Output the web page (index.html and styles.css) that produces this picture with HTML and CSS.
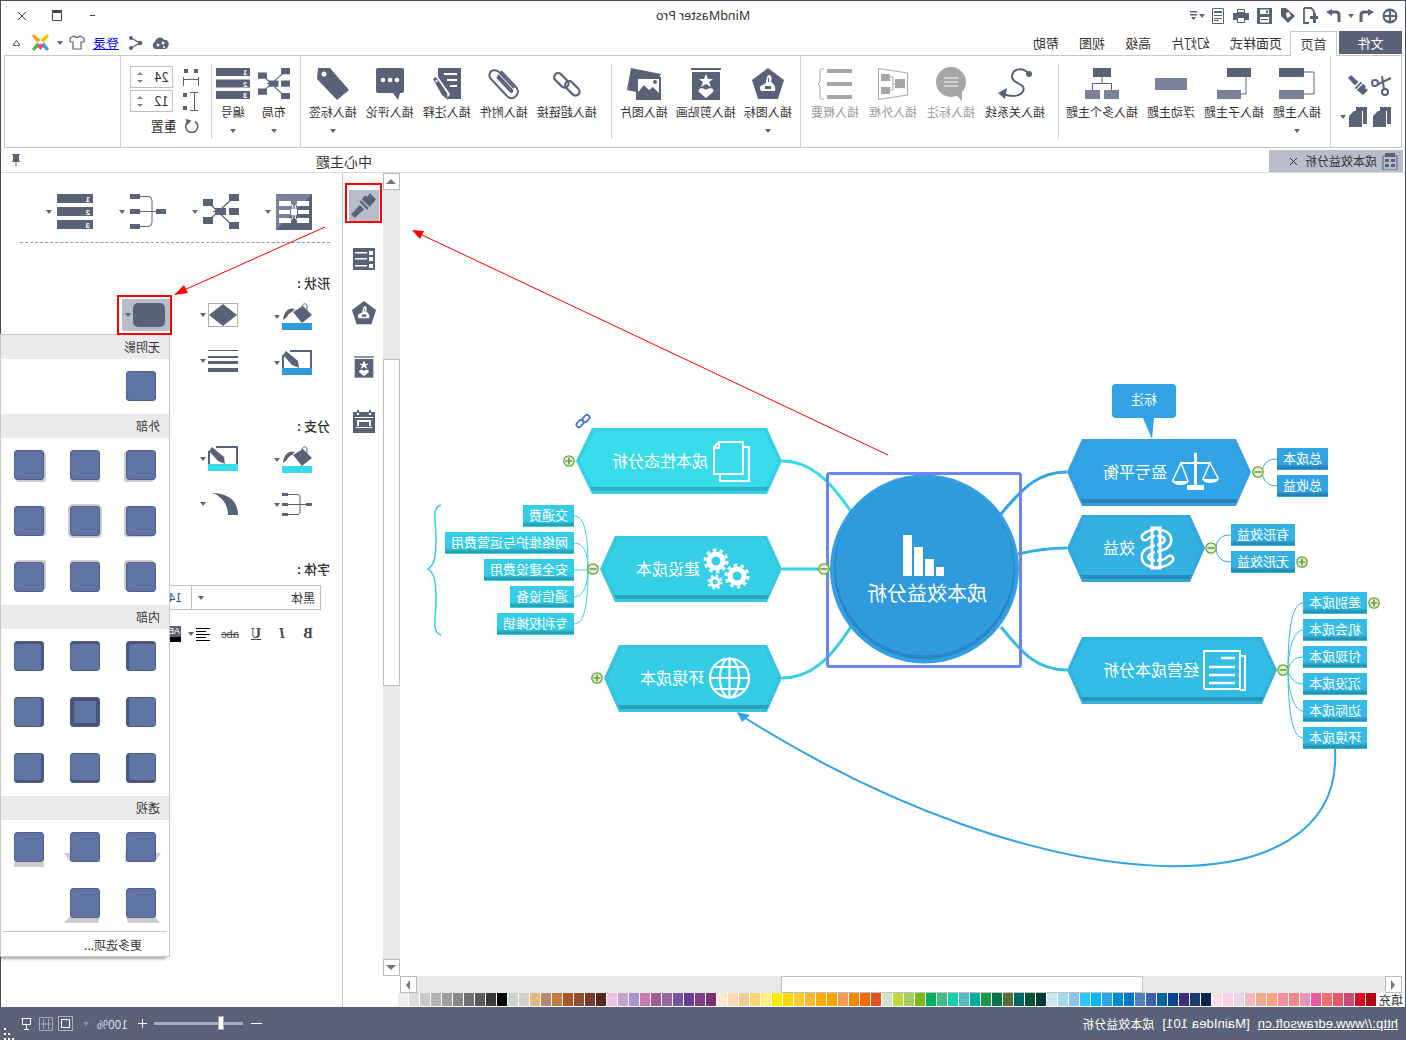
FILE: index.html
```html
<!DOCTYPE html>
<html lang="zh-CN">
<head>
<meta charset="utf-8">
<title>MindMaster Pro</title>
<link rel="stylesheet" href="styles.css">
</head>
<body>
<svg class="defs" width="0" height="0">
  <symbol id="i-brush" viewBox="0 0 24 24"><path d="M0 20.500 8.500 11.500 12.500 15.500 3.500 24Z"/><path d="M8 8.500 15.500 16 17 14.500 9.500 7Z"/><path d="M10.500 6 18 13.500 24 6 18 0 16 3.500 13.500 2.500Z"/></symbol>
  <symbol id="i-pent" viewBox="0 0 32 32"><path d="M16 0 32 12 26 31H6L0 12Z"/><path fill="#fff" d="M17 7c3 0 3 4 2 7 3 2 5 5 4 9H9c-2-3-1-6 2-6 1-1 2-2 3-2 0-3 1-8 3-8Z"/><path d="M13 18h6v3h-6zM16 10h1v4h-1z"/></symbol>
  <symbol id="i-clip" viewBox="0 0 30 32"><path d="M0 0H30V2H0Z"/><path d="M1 4H29V32H1Z"/><path fill="#fff" d="M15 6 17 11 22 11 18 14 20 19 15 16 10 19 12 14 8 11 13 11Z"/><path fill="#fff" d="M15 30 8 24C6 20 12 19 15 22 18 19 24 20 22 24Z"/></symbol>
  <symbol id="i-map" viewBox="0 0 36 36"><path fill="none" stroke="currentColor" stroke-width="1.200" d="M6 9 30 32M6 26 30 4"/><path d="M12 14H23V21H12ZM0 5H10V12H0ZM0 23H10V30H0ZM26 0H36V7H26ZM26 14H36V21H26ZM26 28H36V35H26ZM10 17H12V18H10Z"/></symbol>
  <symbol id="i-num" viewBox="0 0 36 36"><path d="M0 0H36V9H0ZM0 13H36V22H0ZM0 26H36V35H0Z"/></symbol>
  <symbol id="i-tree" viewBox="0 0 36 36"><path d="M0 0H10V5H0ZM0 15H10V20H0ZM0 30H10V35H0ZM26 15H36V20H26Z"/><path fill="none" stroke="currentColor" d="M10 2.500H18Q22 2.500 22 6.500V28.500Q22 32.500 18 32.500H10M10 17.500H26"/></symbol>
  <symbol id="i-bucket" viewBox="0 0 30 20"><path d="M11 9 21 3 30 12 20 20Z"/><path d="M13 6C7 4 2 8 1 17L5 14C6 11 8 10 10 9Z"/><path fill="none" stroke="currentColor" d="M20 4C20 0 25 0 25 3V7"/></symbol>
  <symbol id="i-pen" viewBox="0 0 30 18"><path fill="none" stroke="currentColor" stroke-width="2" d="M8 1H29V18M1 18V5"/><path d="M4 1 16 11 17 18 10 15 1 5Z"/></symbol>
  <symbol id="i-docs" viewBox="0 0 18 20"><path d="M7 0H18V17H14V4H7Z"/><path d="M5 4H13V20H0V9Z"/></symbol>
  <symbol id="plus" viewBox="0 0 12 12"><circle cx="6" cy="6" r="5.200" fill="#e3f0d6" stroke="#64a52a" stroke-width="1.300"/><path d="M2.500 6H9.500M6 2.500V9.500" stroke="#47821a" stroke-width="1.200"/></symbol>
  <symbol id="minus" viewBox="0 0 12 12"><circle cx="6" cy="6" r="5.200" fill="#e3f0d6" stroke="#64a52a" stroke-width="1.300"/><path d="M2.500 6H9.500" stroke="#47821a" stroke-width="1.200"/></symbol>
</svg>

<div class="app">
  <header class="titlebar">
    <div class="qa">
      <span class="qa-i"><svg class="ic" width="16" height="16" viewBox="0 0 16 16"><circle cx="8" cy="8" r="7.500"/><path fill="#fff" d="M3 5 7 3V7H3ZM9 3 13 5V7H9ZM3 9H7V13L3 11ZM9 9H13V11L9 13Z"/></svg></span>
      <span class="qa-i"><svg class="ic" width="16" height="14" viewBox="0 0 16 14"><path fill="none" stroke="currentColor" stroke-width="3" d="M2 13V6Q2 3 5 3H10"/><path d="M9 0 15 3 9 7Z"/></svg></span>
      <span class="qa-s"><i class="dd"></i></span>
      <span class="qa-i"><svg class="ic" width="16" height="14" viewBox="0 0 16 14"><path fill="none" stroke="currentColor" stroke-width="3" d="M14 13V6Q14 3 11 3H6"/><path d="M7 0 1 3 7 7Z"/></svg></span>
      <span class="qa-i"><svg class="ic" width="15" height="17" viewBox="0 0 15 17"><path fill="none" stroke="currentColor" stroke-width="1.800" d="M1 1H8L11 4V7M1 1V16H6"/><path d="M7 9H10V6H13V9H15V12H13V16H10V12H7Z"/></svg></span>
      <span class="qa-i"><svg class="ic" width="15" height="15" viewBox="0 0 15 15"><path d="M1 0H6L15 8 8 15 1 8Z"/><path fill="#fff" d="M6 5 9 4 11 8 7 10Z"/></svg></span>
      <span class="qa-i"><svg class="ic" width="15" height="16" viewBox="0 0 15 16"><path d="M0 0H15V16H0Z"/><path fill="#fff" d="M3 1.500H12V6H3ZM3 9H12V14.500H3Z"/><path d="M9 2.500H11V5H9ZM4 11H11V12H4Z"/></svg></span>
      <span class="qa-i"><svg class="ic" width="16" height="14" viewBox="0 0 16 14"><path d="M4 0H12V4H16V11H12V14H4V11H0V4H4Z"/><path fill="#fff" d="M5 9H11V13H5ZM5 1H11V3H5Z"/></svg></span>
      <span class="qa-i"><svg class="ic" width="12" height="16" viewBox="0 0 12 16"><path fill="none" stroke="currentColor" d="M.500.500H11.500V15.500H.500Z"/><path d="M2 3H10V5H2ZM2 7H10V8H2ZM2 10H10V11H2ZM2 12H7V13H2Z"/></svg></span>
      <span class="qa-s"><i class="dd"></i></span>
      <span class="qa-s"><svg class="ic" width="7" height="9" viewBox="0 0 7 9"><path d="M0 0H7V1.500H0ZM0 3H7V4.500H0ZM1 6H6L3.500 9Z"/></svg></span>
    </div>
    <div class="apptitle">MindMaster Pro</div>
    <div class="winctl">
      <span class="win"><svg width="10" height="3" viewBox="0 0 10 3"><path d="M2 1H7V2H2Z"/></svg></span>
      <span class="win"><svg width="10" height="11" viewBox="0 0 10 11"><path fill="none" stroke="currentColor" d="M.500 2.500H9.500V10.500H.500Z"/><path d="M0 0H10V2H0Z"/></svg></span>
      <span class="win"><svg width="10" height="10" viewBox="0 0 10 10"><path fill="none" stroke="currentColor" d="M1 1 9 9M9 1 1 9"/></svg></span>
    </div>
  </header>

  <nav class="tabs">
    <span class="tab-file">文件</span>
    <span class="tab tab-on">首页</span>
    <span class="tab tab-first">页面样式</span>
    <span class="tab">幻灯片</span>
    <span class="tab">高级</span>
    <span class="tab">视图</span>
    <span class="tab">帮助</span>
    <div class="acct">
      <svg class="ic acct-cloud" width="18" height="14" viewBox="0 0 18 14"><path d="M4 13C0 13 0 7 3 6 4 1 10 0 12 4 16 3 18 8 16 11Q15 13 13 13Z"/><circle cx="6" cy="9" r="1.500" fill="#fff"/><circle cx="11" cy="7" r="1.500" fill="#fff"/><circle cx="12" cy="11" r="1" fill="#fff"/></svg>
      <svg class="ic acct-share" width="14" height="14" viewBox="0 0 14 14"><path fill="none" stroke="currentColor" stroke-width="1.300" d="M2 2 11 7 2 12"/><circle cx="2" cy="2" r="2"/><circle cx="11" cy="7" r="2.300"/><circle cx="2" cy="12" r="2"/></svg>
      <a class="login">登录</a>
      <svg class="ic acct-shirt" width="16" height="15" viewBox="0 0 16 15"><path fill="none" stroke="currentColor" stroke-width="1.200" d="M5 1 1 3V7H4V14H12V7H15V3L11 1Q8 4 5 1Z"/></svg>
      <i class="dd acct-dd"></i>
      <svg class="ic acct-logo" width="17" height="17" viewBox="0 0 17 17"><path fill="#f5a623" d="M2 0 8.500 6 5 8.500 0 2Z"/><path fill="#f2c500" d="M15 0 17 2 12 8.500 8.500 6Z"/><path fill="#58b947" d="M0 15 5 8.500 8.500 11 2 17Z"/><path fill="#3b9ee5" d="M17 15 15 17 8.500 11 12 8.500Z"/><path fill="#ec4f7f" d="M5 12 8.500 9.500 12 12 8.500 16Z"/></svg>
      <svg class="acct-chev" width="9" height="7" viewBox="0 0 9 7"><path fill="none" stroke="#444" d="M1 6 4.500 1.500 8 6Q4.500 8 1 6Z"/></svg>
    </div>
  </nav>

  <section class="ribbon">
    <div class="clipb">
      <svg class="ic" width="22" height="22" viewBox="0 0 22 22"><g fill="none" stroke="currentColor" stroke-width="2"><circle cx="4" cy="9" r="3"/><circle cx="14" cy="18" r="3"/><path d="M6.500 10.500 20 4M13 15 11 2"/></g></svg>
      <svg class="ic cb-rot" width="20" height="20"><use href="#i-brush"/></svg>
      <svg class="ic" width="18" height="20"><use href="#i-docs"/></svg>
      <span class="cb-last"><svg class="ic" width="18" height="20"><use href="#i-docs"/></svg><i class="dd"></i></span>
    </div>
    <i class="vline"></i>
    <div class="rgroup rg-topic">
      <div class="rbtn"><span class="ricon"><svg class="ic" width="36" height="32" viewBox="0 0 36 32"><path d="M0 0H25V9H0Z"/><path class="lite" d="M0 22H25V31H0Z"/><path fill="none" stroke="currentColor" d="M25 4H35V26H25"/></svg></span><span class="rlabel">插入主题</span><i class="dd rdd"></i></div>
      <div class="rbtn"><span class="ricon"><svg class="ic" width="34" height="32" viewBox="0 0 34 32"><path d="M10 0H34V9H10Z"/><path class="lite" d="M0 22H24V31H0Z"/><path fill="none" stroke="currentColor" d="M29 9V26H24"/></svg></span><span class="rlabel">插入子主题</span></div>
      <div class="rbtn"><span class="ricon"><svg class="ic" width="32" height="12" viewBox="0 0 32 12"><path class="lite" d="M0 0H32V12H0Z"/></svg></span><span class="rlabel">浮动主题</span></div>
      <div class="rbtn"><span class="ricon"><svg class="ic" width="34" height="32" viewBox="0 0 34 32"><path d="M8 0H26V9H8Z"/><path class="lite" d="M0 22H15V31H0ZM19 22H34V31H19Z"/><path fill="none" stroke="currentColor" d="M17 9V15M7.500 22V15.500H26.500V22"/></svg></span><span class="rlabel">插入多个主题</span></div>
    </div>
    <i class="vline short"></i>
    <div class="rgroup rg-rel">
      <div class="rbtn"><span class="ricon"><svg class="ic" width="34" height="32" viewBox="0 0 34 32"><path fill="none" stroke="currentColor" stroke-width="2" d="M31 6C25-1 15 0 14 8 13 16 29 15 25 23 22 29 13 29 5 26"/><circle cx="31" cy="6" r="3"/><path d="M0 25 9 20 7 31Z"/></svg></span><span class="rlabel">插入关系线</span></div>
      <div class="rbtn off"><span class="ricon"><svg class="ic" width="32" height="34" viewBox="0 0 32 34"><circle cx="16" cy="15" r="15"/><path d="M20 27 27 34V24Z"/><path fill="none" stroke="#fff" d="M9 11H23M9 15H23M9 19H23"/></svg></span><span class="rlabel">插入标注</span></div>
      <div class="rbtn off"><span class="ricon"><svg class="ic" width="30" height="32" viewBox="0 0 30 32"><path fill="none" stroke="currentColor" d="M.500.500 29.500 5V27L.500 31.500Z"/><path d="M3 6H12V13H3ZM3 19H12V26H3ZM17 11H27V20H17Z"/><path fill="none" stroke="currentColor" d="M12 9H15V22H12M15 16H17"/></svg></span><span class="rlabel">插入外框</span></div>
      <div class="rbtn off"><span class="ricon"><svg class="ic" width="34" height="32" viewBox="0 0 34 32"><path fill="none" stroke="currentColor" d="M6 1H3Q2 1 2 3V14L0 16 2 18V29Q2 31 3 31H6"/><path d="M9 1H34V5H9ZM9 14H34V18H9ZM9 27H34V31H9Z"/></svg></span><span class="rlabel">插入概要</span></div>
    </div>
    <i class="vline"></i>
    <div class="rgroup rg-ins">
      <div class="rbtn"><span class="ricon"><svg class="ic" width="32" height="32"><use href="#i-pent"/></svg></span><span class="rlabel">插入图标</span><i class="dd rdd"></i></div>
      <div class="rbtn"><span class="ricon"><svg class="ic" width="30" height="32"><use href="#i-clip"/></svg></span><span class="rlabel">插入剪贴画</span></div>
      <div class="rbtn"><span class="ricon"><svg class="ic" width="34" height="32" viewBox="0 0 34 32"><path d="M4 0 34 6 32 10H9V24L0 22Z"/><path d="M9 9H34V32H9Z"/><path fill="#fff" d="M11 11H32V30H11Z"/><path d="M11 30V24L17 17 22 22 26 19 32 25V30Z"/><circle cx="28" cy="14" r="2"/></svg></span><span class="rlabel">插入图片</span></div>
    </div>
    <i class="vline short"></i>
    <div class="rgroup rg-attach">
      <div class="rbtn"><span class="ricon"><svg class="ic" width="30" height="32" viewBox="0 0 30 32"><g fill="none" stroke="currentColor" stroke-width="2.200"><rect x="1" y="8" width="17" height="8" rx="4" transform="rotate(45 9 12)"/><rect x="12" y="16" width="17" height="8" rx="4" transform="rotate(45 20 20)"/></g></svg></span><span class="rlabel">插入超链接</span></div>
      <div class="rbtn"><span class="ricon"><svg class="ic" width="32" height="32" viewBox="0 0 32 32"><path fill="none" stroke="currentColor" stroke-width="2" d="M26 20 11 4C8 1 3 2 2 5 1 7 1 9 3 11L18 27C21 31 26 31 28 28 31 25 30 21 28 19L13 3M9 9 22 23C24 25 25 23 24 22L10 7"/></svg></span><span class="rlabel">插入附件</span></div>
      <div class="rbtn"><span class="ricon"><svg class="ic" width="28" height="32" viewBox="0 0 28 32"><path d="M5 0H28V31H14L17 26 5 9Z"/><path fill="none" stroke="#fff" stroke-width="2" d="M11 6H24M14 12H24M17 18H24"/><path d="M0 11 3 9 14 25 15 32 9 27Z"/><path fill="#fff" d="M2 13 4 11.500 5 13 3 14.500Z"/></svg></span><span class="rlabel">插入注释</span></div>
      <div class="rbtn"><span class="ricon"><svg class="ic" width="28" height="32" viewBox="0 0 28 32"><path d="M2 0H26Q28 0 28 2V23Q28 25 26 25H24L22 32 17 25H2Q0 25 0 23V2Q0 0 2 0Z"/><circle cx="7" cy="12" r="2.300" fill="#fff"/><circle cx="14" cy="12" r="2.300" fill="#fff"/><circle cx="21" cy="12" r="2.300" fill="#fff"/></svg></span><span class="rlabel">插入评论</span></div>
      <div class="rbtn"><span class="ricon"><svg class="ic" width="32" height="32" viewBox="0 0 32 32"><path d="M1 0H13L32 22 20 32 0 11Z"/><circle cx="7" cy="6" r="2.500" fill="#fff"/></svg></span><span class="rlabel">插入标签</span><i class="dd rdd"></i></div>
    </div>
    <i class="vline"></i>
    <div class="rgroup rg-lay">
      <div class="rbtn"><span class="ricon"><svg class="ic" width="32" height="32"><use href="#i-map"/></svg></span><span class="rlabel">布局</span><i class="dd rdd"></i></div>
      <div class="rbtn"><span class="ricon"><svg class="ic" width="34" height="32" viewBox="0 0 36 36" preserveAspectRatio="none"><use href="#i-num" width="36" height="36"/><text class="numtxt" transform="translate(33,8) scale(-1,1)">1</text><text class="numtxt" transform="translate(33,21) scale(-1,1)">2</text><text class="numtxt" transform="translate(33,34) scale(-1,1)">3</text></svg></span><span class="rlabel">编号</span><i class="dd rdd"></i></div>
    </div>
    <i class="vline short"></i>
    <div class="rspace">
      <div class="sp-row"><svg class="ic" width="16" height="17" viewBox="0 0 16 17"><path d="M1 0H5V4H1ZM11 0H15V4H11Z"/><path fill="none" stroke="currentColor" d="M0 8.500H16M.500 6V17M15.500 6V17" transform="translate(0,2)"/></svg><span class="spin">24<span class="spin-a"><i></i><b></b></span></span></div>
      <div class="sp-row"><svg class="ic" width="16" height="19" viewBox="0 0 16 19"><path d="M0 1H4V5H0ZM0 14H4V18H0Z"/><path fill="none" stroke="currentColor" d="M15 .500H7M15 18.500H7M11.500 .500V18.500"/></svg><span class="spin">12<span class="spin-a"><i></i><b></b></span></span></div>
      <div class="sp-reset"><svg class="ic" width="15" height="15" viewBox="0 0 15 15"><path fill="none" stroke="currentColor" stroke-width="1.600" d="M11 2.500A6 6 0 1 1 4.500 2.500"/><path d="M1.500 0 7.500 1.500 3.500 6Z"/></svg><span>重置</span></div>
    </div>
    <i class="vline"></i>
  </section>

  <div class="docbar">
    <div class="doctab">
      <svg class="ic" width="16" height="17" viewBox="0 0 16 17"><path d="M1 3H15V17H1Z" fill="none" stroke="currentColor"/><path d="M3 0H13V4H3ZM3 6H7V9H3ZM9 6H13V9H9ZM3 11H7V14H3ZM9 11H13V14H9Z"/></svg>
      <span class="doctab-t">成本效益分析</span>
      <svg class="doctab-x" width="9" height="9" viewBox="0 0 9 9"><path fill="none" stroke="#333" d="M1 1 8 8M8 1 1 8"/></svg>
    </div>
    <span class="ptitle">中心主题</span>
    <svg class="pin" width="10" height="12" viewBox="0 0 10 12"><path d="M1 0H9V1H8V7H9V8H5.500V12H4.500V8H1V7H2V1H1Z" fill="#5a6278"/></svg>
  </div>

  <main class="work">
    <div class="canvas-col">
      <div class="canvas-row">
        <div class="canvas">
          <svg class="map" width="1006" height="803" viewBox="0 173 1006 803">
            <defs>
              <linearGradient id="gc" x1="0" y1="0" x2="0" y2="1"><stop offset="0" stop-color="#35cde6"/><stop offset=".72" stop-color="#35cde6"/><stop offset=".93" stop-color="#2794aa"/><stop offset=".94" stop-color="#35cde6"/></linearGradient>
              <linearGradient id="gb" x1="0" y1="0" x2="0" y2="1"><stop offset="0" stop-color="#31a4e5"/><stop offset=".72" stop-color="#31a4e5"/><stop offset=".93" stop-color="#2478a8"/><stop offset=".94" stop-color="#31a4e5"/></linearGradient>
              <linearGradient id="ge" x1="0" y1="0" x2="0" y2="1"><stop offset="0" stop-color="#33b1e3"/><stop offset=".72" stop-color="#33b1e3"/><stop offset=".93" stop-color="#2582a8"/><stop offset=".94" stop-color="#33b1e3"/></linearGradient>
              <linearGradient id="gf" x1="0" y1="0" x2="0" y2="1"><stop offset="0" stop-color="#33bce5"/><stop offset=".72" stop-color="#33bce5"/><stop offset=".93" stop-color="#258aa8"/><stop offset=".94" stop-color="#33bce5"/></linearGradient>
            </defs>
            <g transform="translate(1406,0) scale(-1,1)">
              <g fill="none" stroke-width="3">
                <path stroke="#36dce8" d="M782 461C810 461 830 480 852 513"/>
                <path stroke="#36cfe6" d="M782 569H830"/>
                <path stroke="#35cde6" d="M782 678C810 678 830 660 852 625"/>
                <path stroke="#30a4e6" d="M1001 514C1025 485 1040 472 1067 472"/>
                <path stroke="#31afe3" d="M1018 554C1035 550 1050 548 1067 548"/>
                <path stroke="#33bce5" d="M1001 627C1020 650 1035 670 1067 670"/>
              </g>
              <g fill="none" stroke="#36cfe6">
                <path d="M574 516C585 516 588 535 588 569M574 543C583 543 588 552 588 569M574 570H588M574 597C583 597 588 586 588 569M574 624C585 624 588 603 588 569"/>
                <path stroke-width="1.500" d="M441 505C431 508 436 520 436 540 436 558 434 565 428 569 434 573 436 580 436 600 436 618 431 632 441 635"/>
              </g>
              <g fill="none" stroke="#31a4e5"><path d="M1277 459C1268 459 1263 463 1262 472M1277 486C1268 486 1263 481 1262 472"/><path d="M1231 535C1222 535 1217 538 1216 548M1231 562C1222 562 1217 558 1216 548"/></g>
              <path fill="none" stroke="#33bce5" d="M1303 603C1292 603 1288 630 1288 670M1303 630C1294 630 1288 650 1288 670M1303 657C1295 657 1290 662 1288 670M1303 684C1295 684 1290 678 1288 670M1303 711C1294 711 1288 690 1288 670M1303 738C1292 738 1288 710 1288 670"/>
              <path fill="none" stroke="#30a3e6" stroke-width="2" d="M1335 749C1345 915 1040 905 742 716"/>
              <path fill="#30a3e6" d="M737 712 750 715 742 722Z"/>

              <rect class="sel" x="827.500" y="473.500" width="193" height="193" rx="2"/>
              <circle cx="924.500" cy="569" r="94.500" fill="#339fe3"/>
              <circle cx="924.500" cy="569" r="90.500" fill="#2a86c2"/>
              <circle cx="924.500" cy="566.500" r="89" fill="#2f9adc"/>
              <path fill="#fff" d="M903 535H912V576H903ZM914 547H923V576H914ZM925 559H934V576H925ZM936 567H944V576H936Z"/>

              <path fill="#33a3e5" d="M1116 384H1172Q1176 384 1176 388V414Q1176 418 1172 418H1154L1152 439 1143 418H1116Q1112 418 1112 414V388Q1112 384 1116 384Z"/>

              <path fill="#36cfe6" d="M576 461 592 428H767L782 461 767 494H592Z"/>
              <path fill="#38dde9" d="M580 461 595 431H764L778 461 764 490H595Z"/>
              <path fill="#2ab2c4" d="M590 487H769L767 491H592Z"/>
              <path fill="#34c8e2" d="M600 569 615 536H767L782 569 767 602H615Z"/>
              <path fill="#36d0e6" d="M604 569 618 539H764L778 569 764 598H618Z"/>
              <path fill="#2aa6bc" d="M614 595H769L767 599H616Z"/>
              <path fill="#34c4e0" d="M604 678 619 645H767L782 678 767 712H619Z"/>
              <path fill="#35cde6" d="M608 678 622 648H764L778 678 764 708H622Z"/>
              <path fill="#2aa2ba" d="M618 705H769L767 709H620Z"/>

              <path fill="#359fe0" d="M1067 472 1082 439H1236L1251 472 1236 506H1082Z"/>
              <path fill="#31a4e5" d="M1071 472 1085 442H1233L1247 472 1233 502H1085Z"/>
              <path fill="#2a84bc" d="M1081 499H1238L1236 503H1083Z"/>
              <path fill="#34a8dc" d="M1067 548 1082 515H1190L1205 548 1190 582H1082Z"/>
              <path fill="#33b1e3" d="M1071 548 1085 518H1187L1201 548 1187 578H1085Z"/>
              <path fill="#2a8dba" d="M1081 575H1192L1190 579H1083Z"/>
              <path fill="#34b2dc" d="M1067 670 1082 637H1262L1277 670 1262 704H1082Z"/>
              <path fill="#33bce5" d="M1071 670 1085 640H1259L1273 670 1259 700H1085Z"/>
              <path fill="#2a96bc" d="M1081 697H1264L1262 701H1083Z"/>

              <g fill="url(#gc)"><rect x="523" y="505" width="51" height="22"/><rect x="445" y="532" width="129" height="22"/><rect x="484" y="559" width="90" height="22"/><rect x="510" y="586" width="64" height="22"/><rect x="497" y="613" width="77" height="22"/></g>
              <g fill="url(#gb)"><rect x="1277" y="448" width="51" height="22"/><rect x="1277" y="475" width="51" height="22"/></g>
              <g fill="url(#ge)"><rect x="1231" y="524" width="64" height="22"/><rect x="1231" y="551" width="64" height="22"/></g>
              <g fill="url(#gf)"><rect x="1303" y="592" width="64" height="22"/><rect x="1303" y="619" width="64" height="22"/><rect x="1303" y="646" width="64" height="22"/><rect x="1303" y="673" width="64" height="22"/><rect x="1303" y="700" width="64" height="22"/><rect x="1303" y="727" width="64" height="22"/></g>

              <use href="#plus" x="563" y="455" width="12" height="12"/>
              <use href="#minus" x="587" y="563" width="12" height="12"/>
              <use href="#plus" x="591" y="672" width="12" height="12"/>
              <use href="#minus" x="818" y="563" width="12" height="12"/>
              <use href="#minus" x="1252" y="466" width="12" height="12"/>
              <use href="#minus" x="1205" y="542" width="12" height="12"/>
              <use href="#minus" x="1277" y="664" width="12" height="12"/>
              <use href="#plus" x="1296" y="556" width="12" height="12"/>
              <use href="#plus" x="1368" y="597" width="12" height="12"/>

              <g fill="none" stroke="#3f7ac8" stroke-width="1.800"><rect x="576" y="421" width="8" height="5" rx="2.500" transform="rotate(-45 580 423.500)"/><rect x="582" y="416" width="8" height="5" rx="2.500" transform="rotate(-45 586 418.500)"/></g>

              <g class="wicon">
                <path fill="none" stroke="#fff" stroke-width="2" d="M719 442H743V474H714V447ZM719 442V448H714M744 447H749V481H720V475"/>
                <g fill="none" stroke="#fff"><circle cx="716" cy="561" r="7" stroke-width="5"/><circle cx="716" cy="561" r="11" stroke-width="3" stroke-dasharray="3.500 3.400"/><circle cx="737" cy="576" r="7" stroke-width="5"/><circle cx="737" cy="576" r="11" stroke-width="3" stroke-dasharray="3.500 3.400"/><circle cx="715" cy="582" r="4" stroke-width="3"/><circle cx="715" cy="582" r="6.500" stroke-width="2" stroke-dasharray="2.500 2.600"/></g>
                <g fill="none" stroke="#fff" stroke-width="2.200"><circle cx="729.500" cy="678" r="19.500"/><ellipse cx="729.500" cy="678" rx="9.500" ry="19.500"/><path d="M729.500 658.500V697.500M710 678H749M713 667H746M713 689H746"/></g>
                <g fill="#fff"><path d="M1194 453H1197V485H1204V490H1187V485H1194Z"/><path d="M1180 462H1211V464H1180Z"/></g>
                <g fill="none" stroke="#fff" stroke-width="1.500"><path d="M1172.500 481 1181 463 1188 481M1203 479 1210 463 1218.500 479"/></g>
                <g fill="#fff"><path d="M1172 481H1189Q1187 485 1180 485 1174 485 1172 481ZM1202 479H1219Q1217 483 1210 483 1204 483 1202 479Z"/></g>
                <path fill="none" stroke="#fff" stroke-width="9" stroke-linecap="round" d="M1145 537C1151 531 1168 531 1168 540 1168 551 1145 546 1145 557 1145 566 1163 566 1170 559"/>
                <path fill="none" stroke="#33b1e3" stroke-width="4" stroke-linecap="round" d="M1145 537C1151 531 1168 531 1168 540 1168 551 1145 546 1145 557 1145 566 1163 566 1170 559"/>
                <path fill="none" stroke="#fff" stroke-width="3" d="M1152 528H1160V568H1152Z"/>
                <path fill="#33b1e3" d="M1155 530H1157V566H1155Z"/>
                <path fill="none" stroke="#fff" stroke-width="2" d="M1204 651H1240V689H1206Q1204 689 1204 687Z"/>
                <path fill="none" stroke="#fff" stroke-width="2" d="M1240 656H1245V690H1240"/>
                <path fill="none" stroke="#fff" stroke-width="2.500" d="M1221 658H1235M1209 667H1235M1209 675H1235M1209 683H1235"/>
              </g>
            </g>
            <g class="mt mt-a">
              <text x="746" y="461">成本性态分析</text>
              <text x="738" y="569">建设成本</text>
              <text x="734" y="678">环境成本</text>
              <text x="271" y="472">盈亏平衡</text>
              <text x="287" y="548">效益</text>
              <text x="255" y="670">经营成本分析</text>
            </g>
            <text class="mt mt-c" x="479" y="593">成本效益分析</text>
            <g class="mt mt-s">
              <text x="262" y="400">标注</text>
              <text x="857.500" y="516">交通费</text>
              <text x="896.500" y="543">网络维护与运营费用</text>
              <text x="877" y="570">安全建设费用</text>
              <text x="864" y="597">通信设备</text>
              <text x="870.500" y="624">专利权摊销</text>
              <text x="103.500" y="459">总成本</text>
              <text x="103.500" y="486">总收益</text>
              <text x="143" y="535">有形效益</text>
              <text x="143" y="562">无形效益</text>
              <text x="71" y="603">差别成本</text>
              <text x="71" y="630">机会成本</text>
              <text x="71" y="657">付现成本</text>
              <text x="71" y="684">沉没成本</text>
              <text x="71" y="711">边际成本</text>
              <text x="71" y="738">环境成本</text>
            </g>
          </svg>
        </div>
        <div class="vscroll">
          <span class="sbtn"><i class="tri-u"></i></span>
          <span class="vthumb"></span>
          <span class="sbtn sbtn-end"><i class="tri-d"></i></span>
        </div>
      </div>
      <div class="hscroll">
        <span class="sbtn"><i class="tri-l"></i></span>
        <span class="hthumb"></span>
        <span class="sbtn sbtn-hend"><i class="tri-r"></i></span>
      </div>
      <div class="palette">
        <i style="background:#ededed"></i><i style="background:#dcdcdc"></i><i style="background:#c8cac8"></i><i style="background:#b2b3b2"></i><i style="background:#9d9e9d"></i><i style="background:#888888"></i><i style="background:#6f6f6f"></i><i style="background:#585858"></i><i style="background:#3c3837"></i><i style="background:#000000"></i><i style="background:#c9d4ca"></i><i style="background:#d4cec9"></i><i style="background:#e2b886"></i><i style="background:#b38a6c"></i><i style="background:#c27b40"></i><i style="background:#ab5527"></i><i style="background:#924f2a"></i><i style="background:#763a31"></i><i style="background:#5a2617"></i><i style="background:#ecc3dc"></i><i style="background:#c5a5cc"></i><i style="background:#a994d2"></i><i style="background:#c77bae"></i><i style="background:#a15d8e"></i><i style="background:#9466a2"></i><i style="background:#7755a0"></i><i style="background:#653d95"></i><i style="background:#7e3f87"></i><i style="background:#782f73"></i><i style="background:#fee8cf"></i><i style="background:#ffd9a8"></i><i style="background:#edcd96"></i><i style="background:#ffd46c"></i><i style="background:#fff080"></i><i style="background:#ffec00"></i><i style="background:#ffd800"></i><i style="background:#ffcd33"></i><i style="background:#ffb833"></i><i style="background:#ffad00"></i><i style="background:#f5a500"></i><i style="background:#f59b55"></i><i style="background:#f58700"></i><i style="background:#f06c00"></i><i style="background:#e55220"></i><i style="background:#cde5cd"></i><i style="background:#c0d940"></i><i style="background:#a6cf60"></i><i style="background:#7eb814"></i><i style="background:#00b05a"></i><i style="background:#44bb85"></i><i style="background:#18cfb0"></i><i style="background:#50bdc0"></i><i style="background:#00ae9c"></i><i style="background:#1e9648"></i><i style="background:#00784f"></i><i style="background:#5a6e30"></i><i style="background:#006666"></i><i style="background:#00552f"></i><i style="background:#003c37"></i><i style="background:#cde8f5"></i><i style="background:#a0d8f0"></i><i style="background:#8cc4ee"></i><i style="background:#28c8ff"></i><i style="background:#00b8f5"></i><i style="background:#2aa8e6"></i><i style="background:#008ccc"></i><i style="background:#0078c8"></i><i style="background:#5080c0"></i><i style="background:#4060aa"></i><i style="background:#0064a5"></i><i style="background:#0a468c"></i><i style="background:#3f2e7d"></i><i style="background:#1e3c70"></i><i style="background:#0f2255"></i><i style="background:#ffdfe5"></i><i style="background:#ffd0e4"></i><i style="background:#e8d5e6"></i><i style="background:#f5b9bd"></i><i style="background:#f0aa90"></i><i style="background:#ffa080"></i><i style="background:#f48fa0"></i><i style="background:#f08888"></i><i style="background:#e695b5"></i><i style="background:#e85c9b"></i><i style="background:#f07070"></i><i style="background:#eb5566"></i><i style="background:#c84d7a"></i><i style="background:#dc0a23"></i><i style="background:#b40514"></i>
        <span class="fill-l">填充</span>
      </div>
    </div>

    <aside class="strip">
      <span class="strip-i on"><svg class="ic" width="25" height="25"><use href="#i-brush"/></svg></span>
      <span class="strip-i"><svg class="ic" width="22" height="22" viewBox="0 0 22 22"><path d="M0 0H22V22H0Z"/><path fill="#fff" d="M2 4H14V5.500H2ZM2 10H14V11.500H2ZM2 17H14V18.500H2ZM16 3H20V7H16ZM16 9H20V13H16ZM16 16H20V20H16Z"/></svg></span>
      <span class="strip-i"><svg class="ic" width="24" height="24"><use href="#i-pent"/></svg></span>
      <span class="strip-i"><svg class="ic" width="20" height="24"><use href="#i-clip"/></svg></span>
      <span class="strip-i"><svg class="ic" width="22" height="23" viewBox="0 0 22 23"><path d="M0 2H22V23H0Z"/><path d="M4 0H6V3H4ZM16 0H18V3H16Z"/><path fill="#fff" d="M2 7H20V8H2ZM4 10H18V16H16V12H6V16H4ZM3 17H19V18H3ZM4 3H6V5H4ZM16 3H18V5H16Z"/></svg></span>
    </aside>

    <aside class="panel">
      <div class="layouts">
        <span class="lcell"><svg class="ic lmap" width="36" height="36" viewBox="0 0 36 36"><path d="M0 0H36V36H0Z" fill="#7b8199"/><path d="M36 0V36H0Z" fill="#5a6278"/><path d="M3 7H15V12H3ZM21 7H33V12H21ZM3 16H14V20H3ZM22 16H33V20H22ZM3 24H15V29H3ZM21 24H33V29H21ZM15 15H21V21H15Z" fill="#fff"/><path fill="none" stroke="#fff" d="M15 10Q17 10 17 15M21 10Q19 10 19 15M15 26Q17 26 17 21M21 26Q19 26 19 21"/></svg><i class="dd"></i></span>
        <span class="lcell"><svg class="ic" width="36" height="36"><use href="#i-map"/></svg><i class="dd"></i></span>
        <span class="lcell"><svg class="ic" width="36" height="36"><use href="#i-tree"/></svg><i class="dd"></i></span>
        <span class="lcell"><svg class="ic" width="36" height="36"><use href="#i-num"/><text class="numtxt" transform="translate(33,8) scale(-1,1)">1</text><text class="numtxt" transform="translate(33,21) scale(-1,1)">2</text><text class="numtxt" transform="translate(33,34) scale(-1,1)">3</text></svg><i class="dd"></i></span>
      </div>
      <div class="dash"></div>

      <h4 class="ph ph-shape">形状 :</h4>
      <div class="pgrid pg1">
        <span class="pcell"><svg class="ic" width="30" height="27" viewBox="0 0 30 27"><use href="#i-bucket" width="30" height="20"/><path class="bar-b" d="M0 20H30V27H0Z"/></svg><i class="dd"></i></span>
        <span class="pcell"><svg class="ic" width="30" height="24" viewBox="0 0 30 24"><path fill="none" stroke="currentColor" stroke-dasharray="1 1" d="M.500.500H29.500V23.500H.500Z"/><path d="M15 1 29 12 15 23 1 12Z"/></svg><i class="dd"></i></span>
        <span class="pcell psel"><svg class="ic" width="32" height="24" viewBox="0 0 32 24"><rect width="32" height="24" rx="5"/></svg><i class="dd"></i></span>
      </div>
      <div class="pgrid pg2">
        <span class="pcell"><svg class="ic" width="30" height="25" viewBox="0 0 30 25"><use href="#i-pen" width="30" height="18"/><path class="bar-b" d="M0 18H30V25H0Z"/></svg><i class="dd"></i></span>
        <span class="pcell"><svg class="ic" width="30" height="22" viewBox="0 0 30 22"><path d="M0 0H30V1H0ZM0 6H30V8H0ZM0 11H30V14H0ZM0 18H30V22H0Z"/></svg><i class="dd"></i></span>
      </div>

      <h4 class="ph ph-branch">分支 :</h4>
      <div class="pgrid pg3">
        <span class="pcell"><svg class="ic" width="30" height="27" viewBox="0 0 30 27"><use href="#i-bucket" width="30" height="20"/><path class="bar-c" d="M0 20H30V27H0Z"/></svg><i class="dd"></i></span>
        <span class="pcell"><svg class="ic" width="30" height="25" viewBox="0 0 30 25"><use href="#i-pen" width="30" height="18"/><path class="bar-c" d="M0 18H30V25H0Z"/></svg><i class="dd"></i></span>
      </div>
      <div class="pgrid pg4">
        <span class="pcell"><svg class="ic" width="30" height="24" viewBox="0 0 30 24"><path d="M0 0H6V3H0ZM0 10H6V13H0ZM0 20H6V23H0ZM24 10H30V13H24Z"/><path fill="none" stroke="currentColor" d="M6 1.500H16Q18 1.500 18 4V19Q18 21.500 16 21.500H6M6 11.500H24"/></svg><i class="dd"></i></span>
        <span class="pcell"><svg class="ic" width="26" height="22" viewBox="0 0 26 22"><path d="M0 0C14 0 26 6 26 22H16C16 12 10 3 0 0Z"/></svg><i class="dd"></i></span>
      </div>

      <h4 class="ph ph-font">字体 :</h4>
      <div class="fontrow">
        <span class="fsel"><span>黑体</span><i class="dd"></i></span>
        <span class="fsize">14</span>
      </div>
      <div class="fmt">
        <b class="f-b">B</b><i class="f-i">I</i><u class="f-u">U</u><s class="f-s">abc</s>
        <svg width="14" height="13" viewBox="0 0 14 13"><path d="M0 0H14V1H0ZM4 3H14V4H4ZM0 6H14V7H0ZM4 9H14V10H4ZM0 12H14V13H0Z"/></svg>
        <i class="dd f-dd"></i>
        <span class="f-col">AB</span>
      </div>

      <div class="popup">
        <div class="phead">无阴影</div>
        <div class="sgrid"><i class="sq"></i></div>
        <div class="phead">外部</div>
        <div class="sgrid">
          <i class="sq o1"></i><i class="sq o2"></i><i class="sq o3"></i>
          <i class="sq o4"></i><i class="sq o5"></i><i class="sq o6"></i>
          <i class="sq o7"></i><i class="sq o8"></i><i class="sq o9"></i>
        </div>
        <div class="phead">内部</div>
        <div class="sgrid">
          <i class="sq n1"></i><i class="sq n2"></i><i class="sq n3"></i>
          <i class="sq n4"></i><i class="sq n5"></i><i class="sq n6"></i>
          <i class="sq n7"></i><i class="sq n8"></i><i class="sq n9"></i>
        </div>
        <div class="phead">透视</div>
        <div class="sgrid">
          <i class="sq p1"></i><i class="sq p2"></i><i class="sq p3"></i>
          <i class="sq p4"></i><i class="sq p5"></i>
        </div>
        <div class="pmore"><span>更多选项...</span></div>
      </div>
    </aside>
  </main>

  <footer class="status">
    <a class="url">http://www.edrawsoft.cn</a>
    <span class="st-txt st-en">[MainIdea 101]</span>
    <span class="st-txt">成本效益分析</span>
    <div class="st-right">
      <svg class="st-minus" width="11" height="3" viewBox="0 0 11 3"><path d="M0 1H11V2H0Z" fill="#fff"/></svg>
      <span class="slider"><i class="sl-thumb"></i></span>
      <svg class="st-plus" width="9" height="9" viewBox="0 0 9 9"><path d="M0 4H9V5H0ZM4 0H5V9H4Z" fill="#fff"/></svg>
      <span class="zoomv">100%</span>
      <i class="dd st-dd"></i>
      <svg class="st-fit" width="15" height="15" viewBox="0 0 15 15"><path fill="none" stroke="#fff" stroke-dasharray="1 1" d="M.500.500H14.500V14.500H.500Z"/><path fill="none" stroke="#fff" d="M3.500 3.500H11.500V11.500H3.500Z"/></svg>
      <svg class="st-grid" width="14" height="14" viewBox="0 0 14 14"><path fill="none" stroke="#a6acbc" d="M.500.500H13.500V13.500H.500ZM4.500 2V12M9.500 2V12M2 7H12"/></svg>
      <svg class="st-pres" width="11" height="12" viewBox="0 0 11 12"><path fill="none" stroke="#fff" d="M.500.500H10.500M1.500.500V6.500H9.500V.500M5.500 6.500V11M3 11.500H8"/></svg>
    </div>
    <svg class="grip" width="10" height="12" viewBox="0 0 10 12"><path fill="#fff" d="M8 0H10V2H8ZM4 5H6V7H4ZM8 5H10V7H8ZM0 10H2V12H0ZM4 10H6V12H4ZM8 10H10V12H8Z"/></svg>
  </footer>

  <svg class="notes" width="1406" height="1040" viewBox="0 0 1406 1040">
    <g transform="translate(1406,0) scale(-1,1)">
      <rect class="note-box" x="346" y="184" width="35" height="38"/>
      <rect class="note-box" x="118" y="296" width="53" height="38"/>
      <path class="note-line" d="M325 227 182 291"/>
      <path fill="#f00" d="M174 295 184 285 188 293Z"/>
      <path class="note-line" d="M888 455 420 234"/>
      <path fill="#f00" d="M412 230 424 231 420 239Z"/>
    </g>
  </svg>
</div>
</body>
</html>
```

FILE: styles.css
```css
* { box-sizing: border-box; }
html, body { margin: 0; padding: 0; background: #fff; }
body { width: 1406px; height: 1040px; overflow: hidden; }
.defs { position: absolute; }

.app {
  position: relative;
  width: 1406px;
  height: 1040px;
  overflow: hidden;
  display: flex;
  flex-direction: column;
  background: #fff;
  color: #333;
  font: 12px/16px "Noto Sans CJK SC", "Noto Sans", sans-serif;
  transform: scaleX(-1);
}
.app::before {
  content: "";
  position: absolute;
  inset: 0;
  border: solid #474e66;
  border-width: 1px 1px 0;
  pointer-events: none;
}
.ic { transform: scaleX(-1); fill: currentColor; color: #5a6278; flex: none; display: block; }
.lite { fill: #7b8199; }
.dd {
  display: inline-block;
  flex: none;
  width: 0;
  height: 0;
  border: 3px solid transparent;
  border-top: 4px solid #666;
  border-bottom: 0;
}

/* title bar */
.titlebar { flex: none; height: 28px; padding-top: 3px; display: grid; grid-template-columns: 1fr auto 1fr; align-items: center; }
.qa { display: flex; align-items: center; padding-left: 4px; }
.qa-i { width: 23px; height: 18px; display: flex; align-items: center; justify-content: center; }
.qa-s { width: 9px; height: 18px; display: flex; align-items: center; justify-content: center; }
.qa-s:nth-child(3) { margin-right: 2px; }
.apptitle { font: 12.500px/16px "Noto Sans", sans-serif; color: #333; }
.winctl { display: flex; justify-content: flex-end; padding-right: 5px; }
.win { width: 35px; display: flex; justify-content: center; align-items: center; }
.win svg { fill: #444; color: #444; }

/* tabs */
.tabs { flex: none; height: 27px; display: flex; align-items: flex-end; padding-left: 4px; font-size: 13px; }
.tab-file { width: 63px; height: 23px; margin: 0 2px 1px 0; background: #5a6278; color: #fff; display: flex; align-items: center; justify-content: center; }
.tab { padding: 0 10px; height: 25px; display: flex; align-items: center; }
.tab-on { width: 47px; justify-content: center; background: #fff; border: 1px solid #c8c8c8; border-bottom: 0; position: relative; top: 1px; color: #444; padding: 0; }
.tab-first { margin-left: -2px; }
.acct { margin-left: auto; height: 25px; display: flex; align-items: center; }
.acct-cloud { margin-right: 9px; }
.acct-share { margin-right: 10px; }
.login { color: #00f; font-size: 13px; text-decoration: underline; margin-right: 8px; width: 26px; }
.acct-shirt { margin-right: 6px; }
.acct-dd { margin-right: 8px; }
.acct-logo { margin-right: 11px; }
.acct-chev { margin-right: 12px; }

/* ribbon */
.ribbon { flex: none; height: 93px; margin: 0 4px; border: 1px solid #c8c8c8; display: flex; align-items: flex-start; }
.vline { flex: none; width: 1px; height: 91px; background: #d0d0d0; }
.vline.short { height: 75px; margin-top: 8px; }
.clipb { flex: none; width: 70px; height: 91px; padding: 17px 0 0 8px; display: grid; grid-template-columns: 22px 26px; grid-template-rows: 24px 24px; row-gap: 8px; justify-items: center; align-items: center; align-content: start; }
.cb-rot { transform: scaleX(-1) rotate(90deg); }
.cb-last { position: relative; display: block; }
.cb-last .dd { position: absolute; right: -9px; top: 8px; }
.rgroup { display: flex; padding-top: 11px; }
.rg-topic { gap: 9px; padding-left: 9px; padding-right: 7px; }
.rg-rel { gap: 10px; padding-left: 13px; padding-right: 10px; }
.rg-ins { gap: 8px; padding-left: 8px; padding-right: 8px; }
.rg-attach { gap: 9px; padding-left: 14px; padding-right: 8px; }
.rg-lay { gap: 7px; padding-left: 9px; padding-right: 4px; }
.rg-lay .ricon { width: 34px; }
.rbtn { display: flex; flex-direction: column; align-items: center; white-space: nowrap; }
.ricon { width: 40px; height: 34px; display: flex; align-items: center; justify-content: center; }
.rlabel { margin-top: 3px; font-size: 12px; line-height: 16px; color: #333; }
.rdd { margin-top: 9px; }
.off .ic { color: #a6a6a6; }
.off .rlabel { color: #9a9a9a; }
.numtxt { font: bold 8px "Liberation Sans", sans-serif; fill: #fff; }
.rspace { flex: none; width: 90px; padding: 9px 0 0 12px; }
.sp-row { display: flex; align-items: center; gap: 10px; height: 24px; }
.spin { width: 43px; height: 22px; border: 1px solid #c0c0c0; display: flex; align-items: center; justify-content: space-between; padding: 0 6px 0 3px; font-size: 13px; color: #333; }
.spin-a { display: flex; flex-direction: column; gap: 5px; }
.spin-a i { border: 3px solid transparent; border-top: 0; border-bottom: 3px solid #888; }
.spin-a b { border: 3px solid transparent; border-bottom: 0; border-top: 3px solid #888; }
.sp-reset { display: flex; align-items: center; gap: 7px; margin-top: 4px; height: 18px; font-size: 13px; }

/* doc bar */
.docbar { flex: none; height: 24px; display: flex; align-items: flex-end; padding-left: 3px; }
.doctab { width: 134px; height: 22px; background: #b9bdca; display: flex; align-items: center; padding-left: 5px; }
.doctab-t { margin-left: 5px; font-size: 12px; width: 72px; white-space: nowrap; }
.doctab-x { margin-left: 7px; }
.ptitle { margin-left: auto; font-size: 14px; line-height: 22px; margin-right: 295px; white-space: nowrap; }
.pin { margin: 0 11px 6px 0; }

/* work area */
.work { flex: 1; min-height: 0; display: flex; border-top: 1px solid #dcdcdc; }
.canvas-col { flex: none; width: 1023px; display: flex; flex-direction: column; }
.canvas-row { flex: 1; min-height: 0; display: flex; }
.canvas { flex: 1; min-width: 0; overflow: hidden; }
.map { display: block; }
.vscroll { flex: none; width: 17px; background: #e9e9e9; display: flex; flex-direction: column; }
.sbtn { flex: none; width: 17px; height: 17px; background: #fff; border: 1px solid #bbb; display: flex; align-items: center; justify-content: center; }
.vthumb { flex: none; height: 327px; margin-top: 169px; background: #fff; border: 1px solid #c0c0c0; }
.sbtn-end { margin-top: auto; }
.tri-u, .tri-d, .tri-l, .tri-r { width: 0; height: 0; border: 5px solid transparent; }
.tri-u { border-top: 0; border-bottom: 5px solid #777; }
.tri-d { border-bottom: 0; border-top: 5px solid #777; }
.tri-l { border-left: 0; border-right: 4px solid #777; }
.tri-r { border-right: 0; border-left: 4px solid #777; }
.hscroll { flex: none; height: 17px; margin: 0 17px 0 4px; background: #e9e9e9; display: flex; }
.hthumb { width: 362px; margin-left: 242px; background: #fff; border: 1px solid #c0c0c0; }
.sbtn-hend { margin-left: auto; }
.palette { flex: none; height: 14px; display: flex; flex-direction: row-reverse; justify-content: flex-end; gap: 1px; padding-right: 15px; }
.palette i { flex: none; width: 10px; height: 13px; }
.fill-l { width: 26px; margin-left: 3px; margin-right: auto; font-size: 12px; line-height: 14px; white-space: nowrap; }

/* strip */
.strip { flex: none; width: 40px; padding: 5px 2px 0 0; display: flex; flex-direction: column; align-items: center; }
.strip-i { height: 54px; width: 30px; display: flex; align-items: center; justify-content: center; }
.strip-i.on { background: linear-gradient(#b9bdca, #b9bdca) center / 30px 31px no-repeat; }

/* panel */
.panel { flex: 1; position: relative; border-left: 1px solid #c8c8c8; padding: 21px 0 0 30px; }
.layouts { display: flex; gap: 37px; height: 36px; }
.lcell { position: relative; display: flex; }
.lcell .dd { position: absolute; top: 50%; margin-top: -2px; right: -11px; }
.pcell .dd { position: absolute; top: 50%; margin-top: -2px; right: -8px; }
.dash { height: 0; border-top: 1px dashed #999; margin: 12px 20px 0 -18px; }
.ph { margin: 0 0 0 -18px; font-size: 13px; font-weight: 500; line-height: 18px; height: 18px; color: #333; }
.ph-shape { margin-top: 31px; }
.ph-branch { margin-top: 41px; }
.ph-font { margin-top: 43px; }
.pgrid { display: grid; grid-template-columns: repeat(3, 74px); align-items: start; }
.pcell { position: relative; display: inline-flex; width: 30px; }
.pg1 { margin-top: 11px; height: 24px; }
.pg2 { margin-top: 23px; height: 26px; }
.pg3 { margin-top: 11px; height: 27px; }
.pg4 { margin-top: 20px; height: 24px; }
.bar-b { fill: #2f9adc; }
.bar-c { fill: #36dce8; }
.psel { width: 48px; height: 32px; margin: -4px 0 0 -6px; background: #b9bdca; padding: 4px 0 0 5px; }
.pcell.psel .dd { right: 3px; }
.fontrow { display: flex; margin: 7px 0 0 -9px; height: 25px; }
.fsel { width: 130px; border: 1px solid #c0c0c0; display: flex; align-items: center; justify-content: space-between; padding: 0 6px 0 5px; }
.fsize { width: 30px; border: 1px solid #c0c0c0; border-left: 0; padding: 3px 0 0 9px; color: #1b5aa0; }
.fmt { margin: 15px 0 0 -9px; height: 18px; display: flex; align-items: center; font-family: "Liberation Serif", serif; font-size: 14px; color: #444; }
.f-b, .f-i, .f-u, .f-s { width: 26px; text-align: center; display: block; }
.f-i, .f-u { font-weight: 700; }
.f-s { font-family: "Liberation Sans", sans-serif; font-size: 11px; }
.fmt svg { margin-left: 7px; }
.f-dd { margin-left: 2px; }
.f-col { margin-left: 7px; width: 14px; height: 16px; background: linear-gradient(#5a6278 0 11px, #000 11px); color: #fff; font: 9px/11px "Liberation Sans", sans-serif; text-align: center; }

/* shadow popup */
.popup {
  position: absolute;
  z-index: 5;
  top: 161px;
  left: 172px;
  width: 170px;
  height: 623px;
  background: #fff;
  border: 1px solid #c8c8c8;
  box-shadow: 3px 3px 3px -1px rgba(60, 60, 60, .45);
}
.phead { height: 24px; padding-left: 9px; background: #ebebeb; font-size: 12px; line-height: 24px; color: #333; }
.sgrid { display: grid; grid-template-columns: repeat(3, 30px); gap: 26px; padding: 12px 0 13px 13px; isolation: isolate; }
.sq { position: relative; display: block; width: 30px; height: 30px; background: #6074a3; border: 1px solid #4f5f88; border-radius: 3px; }
.o1 { box-shadow: 2px 2px 0 #ccc; }
.o2 { box-shadow: 0 2px 0 #ccc; }
.o3 { box-shadow: -2px 2px 0 #ccc; }
.o4 { box-shadow: 2px 0 0 #ccc, 2px 1px 0 #ccc; }
.o5 { box-shadow: 0 0 0 2px #ccc; }
.o6 { box-shadow: -2px 0 0 #ccc; }
.o7 { box-shadow: 2px -2px 0 #ccc; }
.o8 { box-shadow: 0 -2px 0 #ccc; }
.o9 { box-shadow: -2px -2px 0 #ccc; }
.n1 { box-shadow: inset -2px 2px 0 #47567f; }
.n2 { box-shadow: inset 0 2px 0 #47567f; }
.n3 { box-shadow: inset 2px 2px 0 #47567f; }
.n4 { box-shadow: inset -2px 0 0 #47567f; }
.n5 { box-shadow: inset 0 0 0 3px #47567f; }
.n6 { box-shadow: inset 2px 0 0 #47567f; }
.n7 { box-shadow: inset -2px -2px 0 #47567f; }
.n8 { box-shadow: inset 0 -2px 0 #47567f; }
.n9 { box-shadow: inset 2px -2px 0 #47567f; }
.p1::after, .p2::after, .p3::after, .p4::after, .p5::after { content: ""; position: absolute; z-index: -1; background: #ccc; }
.p1::after { left: -6px; width: 36px; top: 20px; height: 9px; clip-path: polygon(0 0, 100% 0, 100% 100%, 6px 100%); }
.p2::after { left: -1px; width: 36px; top: 20px; height: 9px; clip-path: polygon(0 0, 100% 0, calc(100% - 6px) 100%, 0 100%); }
.p3::after { left: -1px; right: -1px; top: 29px; height: 5px; }
.p4::after { left: -5px; width: 34px; top: 28px; height: 6px; clip-path: polygon(5px 0, 100% 0, calc(100% - 2px) 100%, 0 100%); }
.p5::after { left: -1px; width: 36px; top: 28px; height: 6px; clip-path: polygon(0 0, calc(100% - 5px) 0, 100% 100%, 2px 100%); }
.pmore { margin: 0 2px; border-top: 1px solid #c8c8c8; height: 26px; padding: 5px 0 0 25px; font-size: 12px; }

/* status bar */
.status { flex: none; height: 33px; background: #5a6278; display: flex; align-items: center; padding-left: 8px; color: #fff; position: relative; font-size: 12px; gap: 8px; }
.url { text-decoration: underline; font-family: "Liberation Sans", sans-serif; font-size: 13px; letter-spacing: .13px; }
.st-txt { white-space: nowrap; }
.st-en { font-family: "Liberation Sans", sans-serif; font-size: 13px; letter-spacing: .1px; }
.st-right { margin-left: auto; margin-right: 21px; display: flex; align-items: center; }
.slider { position: relative; width: 89px; height: 3px; background: #a6acbc; margin: 0 7px 0 8px; }
.sl-thumb { position: absolute; left: 19px; top: -6px; width: 6px; height: 14px; background: #fff; border: 1px solid #a6acbc; }
.zoomv { margin-left: 10px; font-size: 12px; color: #d8dbe3; width: 31px; white-space: nowrap; }
.st-dd { margin-left: 8px; border-top-color: #8a90a2; }
.st-fit { margin-left: 10px; }
.st-grid { margin-left: 5px; }
.st-pres { margin-left: 7px; }
.grip { position: absolute; right: 4px; bottom: 0; }

/* mind map text */
.mt text, text.mt { text-anchor: middle; dominant-baseline: central; fill: #fff; font-family: "Noto Sans CJK SC", sans-serif; }
.mt-a { font-size: 16px; transform: translateY(-1px); }
.mt-c { font-size: 20px; transform: translateY(-1px); }
.mt-s { font-size: 13px; transform: translateY(-2px); }
.sel { fill: none; stroke: #6b86ee; stroke-width: 3; }

/* annotations */
.notes { position: absolute; left: 0; top: 0; z-index: 9; pointer-events: none; }
.note-box { fill: none; stroke: #f00; stroke-width: 2; }
.note-line { fill: none; stroke: #f00; stroke-width: 1; }
```
